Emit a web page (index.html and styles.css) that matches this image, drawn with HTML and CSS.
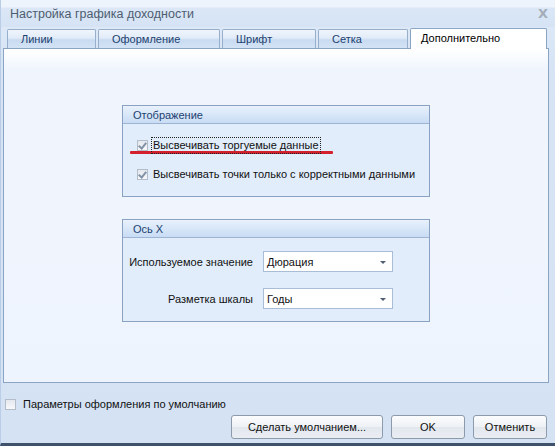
FILE: index.html
```html
<!DOCTYPE html>
<html lang="ru">
<head>
    <meta charset="UTF-8">
    <title>Настройка графика доходности</title>
    <link rel="stylesheet" href="styles.css">
</head>
<body>
    <div class="window">
        <div class="titlebar">
            <span class="title">Настройка графика доходности</span>
            <span class="close">X</span>
        </div>

        <div class="tabs">
            <div class="tab tab-lines">Линии</div>
            <div class="tab tab-design">Оформление</div>
            <div class="tab tab-font">Шрифт</div>
            <div class="tab tab-grid">Сетка</div>
            <div class="tab tab-extra active">Дополнительно</div>
        </div>

        <div class="panel">
            <div class="group group-display">
                <div class="group-header">Отображение</div>
                <div class="group-body">
                    <label class="check-row">
                        <span class="checkbox checked"></span>
                        <span class="check-text focused">Высвечивать торгуемые данные</span>
                    </label>
                    <div class="red-line"></div>
                    <label class="check-row">
                        <span class="checkbox checked"></span>
                        <span class="check-text">Высвечивать точки только с корректными данными</span>
                    </label>
                </div>
            </div>

            <div class="group group-axis">
                <div class="group-header">Ось X</div>
                <div class="group-body">
                    <div class="field-row">
                        <span class="field-label">Используемое значение</span>
                        <div class="combo">
                            <span>Дюрация</span>
                            <span class="combo-arrow"></span>
                        </div>
                    </div>
                    <div class="field-row">
                        <span class="field-label">Разметка шкалы</span>
                        <div class="combo">
                            <span>Годы</span>
                            <span class="combo-arrow"></span>
                        </div>
                    </div>
                </div>
            </div>
        </div>

        <div class="footer">
            <label class="check-row default-row">
                <span class="checkbox"></span>
                <span class="check-text">Параметры оформления по умолчанию</span>
            </label>
            <div class="buttons">
                <button class="button button-wide">Сделать умолчанием...</button>
                <button class="button">OK</button>
                <button class="button">Отменить</button>
            </div>
        </div>
    </div>
</body>
</html>
```

FILE: styles.css
```css
body {
    margin: 0;
    font-family: "Liberation Sans", Arial, sans-serif;
    font-size: 11px;
    background-color: #d7e4f4;
}

.window {
    width: 555px;
    height: 446px;
    box-sizing: border-box;
    display: flex;
    flex-direction: column;
    background: linear-gradient(to bottom, #e2ecf8 0px, #d6e4f5 60px, #d4e2f4 100%);
    border-bottom: 3px solid #3f526b;
    border-left: 1px solid #b9cde6;
}

.titlebar {
    height: 27px;
    display: flex;
    align-items: center;
    justify-content: space-between;
    padding: 0 9px;
    background: linear-gradient(to bottom, #eef4fc 0px, #eef4fc 7px, #dbe7f6 8px, #d5e3f5 27px);
}

.title {
    font-size: 12.5px;
    color: #4e5d70;
    padding-top: 1px;
}

.close {
    font-family: "DejaVu Sans", sans-serif;
    font-size: 13px;
    color: #a3adba;
    font-weight: bold;
    margin-right: -2px;
}

.tabs {
    display: flex;
    align-items: flex-end;
    height: 21px;
    padding-left: 6px;
    gap: 2px;
}

.tab {
    height: 19px;
    box-sizing: border-box;
    border: 1px solid #98afcc;
    border-bottom: none;
    border-radius: 2px 2px 0 0;
    background: linear-gradient(to bottom, #f0f5fc 0%, #e1ebf8 45%, #c9dbf1 55%, #d4e3f5 100%);
    color: #1c3f70;
    padding: 3px 0 0 13px;
}

.tab-lines { width: 89px; }
.tab-design { width: 122px; }
.tab-font { width: 94px; }
.tab-grid { width: 90px; }

.tab.active {
    width: 137px;
    height: 21px;
    background: #ffffff;
    color: #000000;
    border-color: #8ca4c4;
    padding: 3px 0 0 10px;
    position: relative;
    z-index: 1;
    margin-bottom: -1px;
}

.panel {
    height: 335px;
    margin: 0 6px 0 2px;
    box-sizing: border-box;
    border: 1px solid #8ca4c4;
    background: linear-gradient(to bottom, #ffffff 0px, #f0f5fd 20px, #eef4fd 100%);
    display: flex;
    flex-direction: column;
    align-items: center;
    padding-top: 56px;
}

.group {
    width: 308px;
    box-sizing: border-box;
    border: 1px solid #8aa2c2;
    background-color: #e2edfb;
}

.group-axis {
    margin-top: 22px;
}

.group-header {
    height: 18px;
    box-sizing: border-box;
    padding: 3px 0 0 10px;
    color: #1c3f70;
    border-bottom: 1px solid #9db4d3;
    background: linear-gradient(to bottom, #e9f1fc 0%, #d5e5f8 60%, #c9dcf4 100%);
}

.group-display .group-body {
    height: 72px;
    padding: 13px 0 0 14px;
    box-sizing: border-box;
}

.check-row {
    display: flex;
    align-items: center;
    gap: 3px;
    color: #111111;
}

.checkbox {
    width: 11px;
    height: 11px;
    box-sizing: border-box;
    border: 1px solid #b3bdc9;
    background: linear-gradient(to bottom, #e4e8ee, #f7f8fa);
    position: relative;
}

.checkbox.checked::after {
    content: "";
    position: absolute;
    left: 2px;
    top: 0px;
    width: 3px;
    height: 6px;
    border: solid #8292a8;
    border-width: 0 2px 2px 0;
    transform: rotate(40deg);
}

.check-text {
    padding: 1px 1px 2px 1px;
    border: 1px dotted transparent;
}

.check-text.focused {
    border-color: #222222;
}

.red-line {
    width: 203px;
    height: 3px;
    background-color: #d4202c;
    margin: -3px 0 12px -7px;
    border-radius: 1px;
}

.group-axis .group-body {
    height: 83px;
    box-sizing: border-box;
    padding-top: 13px;
    display: flex;
    flex-direction: column;
    gap: 16px;
}

.field-row {
    display: flex;
    align-items: center;
    justify-content: flex-end;
    padding-right: 36px;
    gap: 10px;
    color: #111111;
}

.combo {
    width: 130px;
    height: 21px;
    box-sizing: border-box;
    border: 1px solid #a9bdd6;
    background: #ffffff;
    display: flex;
    align-items: center;
    justify-content: space-between;
    padding: 0 6px 0 3px;
}

.combo-arrow {
    width: 0;
    height: 0;
    border-left: 3px solid transparent;
    border-right: 3px solid transparent;
    border-top: 3px solid #4f5d70;
    margin-top: 1px;
}

.footer {
    flex: 1;
    display: flex;
    flex-direction: column;
    padding: 13px 8px 0 4px;
}

.default-row {
    gap: 5px;
}

.buttons {
    display: flex;
    justify-content: flex-end;
    gap: 8px;
    margin-top: 2px;
}

.button {
    width: 74px;
    height: 24px;
    font-family: "Liberation Sans", Arial, sans-serif;
    font-size: 11px;
    color: #111111;
    border: 1px solid #8d9aab;
    border-radius: 3px;
    background: linear-gradient(to bottom, #fbfcfd 0%, #eef1f5 50%, #e2e7ee 51%, #eaeef3 100%);
    padding: 0;
}

.button-wide {
    width: 152px;
}
```
